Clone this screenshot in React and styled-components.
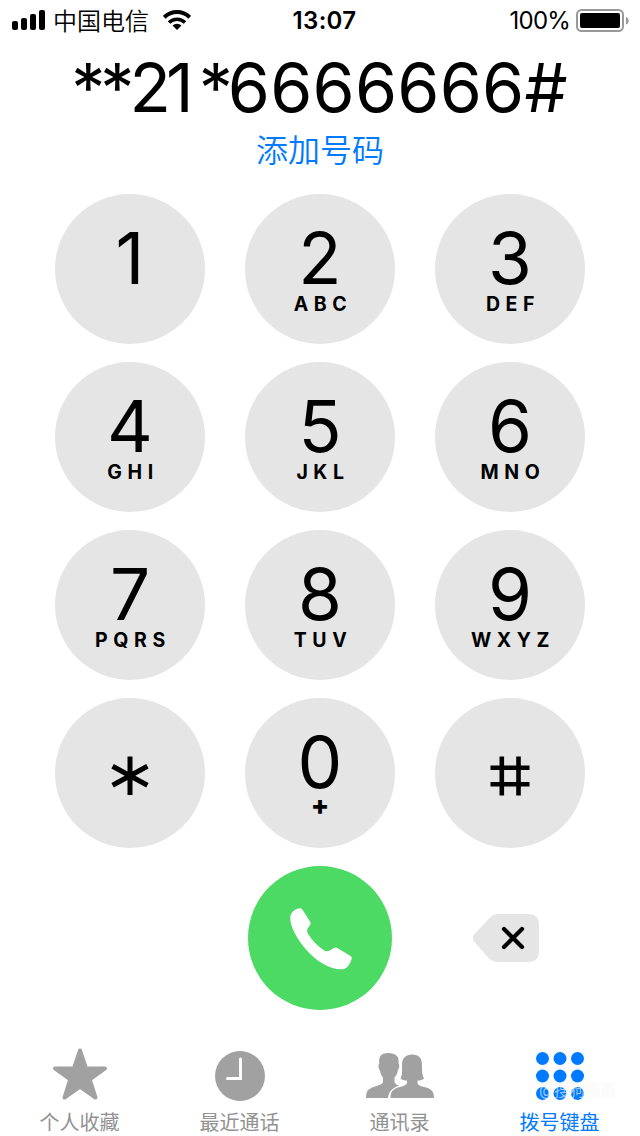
import styled, { createGlobalStyle } from "styled-components"

const keys = [
  { digit: "1", letters: "" },
  { digit: "2", letters: "ABC" },
  { digit: "3", letters: "DEF" },
  { digit: "4", letters: "GHI" },
  { digit: "5", letters: "JKL" },
  { digit: "6", letters: "MNO" },
  { digit: "7", letters: "PQRS" },
  { digit: "8", letters: "TUV" },
  { digit: "9", letters: "WXYZ" },
  { symbol: "star" },
  { digit: "0", letters: "+" },
  { symbol: "hash" },
]

const tabs = [
  { label: "个人收藏", Icon: StarIcon },
  { label: "最近通话", Icon: ClockIcon },
  { label: "通讯录", Icon: ContactsIcon },
  { label: "拨号键盘", Icon: KeypadIcon, active: true },
]

export default function App() {
  return (
    <SCPhone>
      <GlobalStyle />
      <StatusBar />
      <SCNumber>
        <SCTight>**2</SCTight>1<SCTight $gap>*</SCTight>6666666#
      </SCNumber>
      <SCAddNumber>添加号码</SCAddNumber>
      <SCKeypad>
        {keys.map((key) => (
          <Key key={key.digit || key.symbol} {...key} />
        ))}
      </SCKeypad>
      <SCActions>
        <SCCall aria-label="call">
          <PhoneIcon />
        </SCCall>
        <SCDelete aria-label="delete">
          <DeleteIcon />
        </SCDelete>
      </SCActions>
      <SCTabBar>
        {tabs.map(({ label, Icon, active }) => (
          <SCTab key={label} $active={active}>
            <SCTabIcon>
              <Icon />
              {active && <SCWatermark>@搜狗指南</SCWatermark>}
            </SCTabIcon>
            <SCTabLabel>{label}</SCTabLabel>
          </SCTab>
        ))}
      </SCTabBar>
    </SCPhone>
  )
}

function StatusBar() {
  return (
    <SCStatusBar>
      <SCStatusLeft>
        <SignalIcon />
        <SCCarrier>中国电信</SCCarrier>
        <WifiIcon />
      </SCStatusLeft>
      <SCTime>13:07</SCTime>
      <SCStatusRight>
        <SCPercent>100%</SCPercent>
        <BatteryIcon />
      </SCStatusRight>
    </SCStatusBar>
  )
}

function Key(props) {
  const { digit, letters, symbol } = props

  if (symbol) {
    return (
      <SCKey $centered aria-label={symbol}>
        {symbol === "star" ? <StarKeyIcon /> : <HashKeyIcon />}
      </SCKey>
    )
  }

  return (
    <SCKey>
      <SCDigit>{digit}</SCDigit>
      <SCLetters $plus={letters === "+"}>{letters}</SCLetters>
    </SCKey>
  )
}

function SignalIcon() {
  return (
    <svg width="33" height="20" viewBox="0 0 33 20" fill="#000">
      <rect x="0" y="11" width="6" height="9" rx="2" />
      <rect x="9" y="8" width="6" height="12" rx="2" />
      <rect x="18" y="4" width="6" height="16" rx="2" />
      <rect x="27" y="0" width="6" height="20" rx="2" />
    </svg>
  )
}

function WifiIcon() {
  return (
    <svg width="28" height="20" viewBox="0 0 28 20" fill="none" stroke="#000" strokeWidth="4">
      <path d="M1.3 7.300a18 18 0 0 1 25.400 0" />
      <path d="M6 12.500a11.300 11.300 0 0 1 16 0" strokeWidth="3.600" />
      <path d="M14 20l-4.500-4.400a6.400 6.400 0 0 1 9 0z" fill="#000" stroke="none" />
    </svg>
  )
}

function BatteryIcon() {
  return (
    <svg width="54" height="24" viewBox="0 0 54 24">
      <rect x="1" y="2" width="46" height="21" rx="4.5" fill="none" stroke="#999" strokeWidth="2" />
      <rect x="4" y="5" width="40" height="15" rx="2" fill="#000" />
      <path d="M50 9c3.600 1 3.600 6.500 0 7.500z" fill="#999" />
    </svg>
  )
}

function StarKeyIcon() {
  return (
    <svg width="38" height="40" viewBox="0 0 38 40" stroke="#000" strokeWidth="5">
      <path d="M19 0.500V39M1.600 10.200L36.400 29.200M36.400 10.200L1.600 29.200" />
    </svg>
  )
}

function HashKeyIcon() {
  return (
    <svg width="40" height="40" viewBox="0 0 40 40" stroke="#000" strokeWidth="4.6">
      <path d="M11.800 0.500V39.500M28.500 0.500V39.500M0.500 11.700H39.500M0.500 28.300H39.500" />
    </svg>
  )
}

function PhoneIcon() {
  return (
    <svg width="64" height="64" viewBox="0 0 64 64" fill="#fff">
      <path d="M8.500 1.800C11.500 0.600 12.600 1.400 14 3.600L21 14.500C22 16 21.700 17 20.700 18.500L18.700 21.600C17.600 23.500 18 25 19.200 27C23 33.500 28 38.500 34.500 43C36.500 44.400 38 44.700 40 43.700L44.600 41.200C46.200 40.300 47.200 40.400 48.700 41.200L60.800 48.600C62.800 49.900 63.200 50.700 62.400 52.800C60.300 58.200 58 61.700 53.500 62.300C41 63 27 54 17 42.500C7.500 31.500 0.500 18.500 1.300 9.500C2 5.500 4.500 3.200 8.500 1.800Z" />
    </svg>
  )
}

function DeleteIcon() {
  return (
    <svg width="66" height="48" viewBox="0 0 66 48">
      <path
        d="M25 0H55Q66 0 66 11V37Q66 48 55 48H25Q20 48 16.500 45L1 27.500Q-1.500 24 1 20.500L16.500 4Q20 0 25 0Z"
        fill="#e5e5e5"
      />
      <path d="M31 15L49 33M49 15L31 33" stroke="#000" strokeWidth="4.200" strokeLinecap="round" />
    </svg>
  )
}

function StarIcon() {
  return (
    <svg width="56" height="54" viewBox="0 0 56 54" fill="#a1a1a1" stroke="#a1a1a1" strokeWidth="4" strokeLinejoin="round">
      <path d="M28 3.500L34 21.500H53L37.800 32.500L43.500 50.500L28 39.500L12.500 50.500L18.200 32.500L3 21.500H22Z" />
    </svg>
  )
}

function ClockIcon() {
  return (
    <svg width="50" height="54" viewBox="0 0 50 54">
      <circle cx="25" cy="29" r="25" fill="#a1a1a1" />
      <path d="M25.500 12V31.500H12.500" fill="none" stroke="#fff" strokeWidth="3" strokeLinecap="round" />
    </svg>
  )
}

function ContactsIcon() {
  return (
    <svg width="68" height="54" viewBox="0 0 68 54" fill="#a1a1a1">
      <path d="M0 51C0 43 3 41.500 9 39.500C13 38 17 37.500 17 34.500V30.500C15 28.500 14.500 26 14 23.500C12.500 22 12 18 13.300 16.500C12.500 10 15 6 22 6C30 6 33.500 9.500 32.500 16.500C34 18 33 22 31.800 23.500C31.300 26.500 30.500 28.500 28.500 30.500V34.500C28.500 36.500 30 37.500 33 38.500C26 41.500 23 44 22 51Z" />
      <path d="M24.500 51C24.500 43.500 28 41.500 34 40C38 39 41 38 41 35.500V33.500C38.500 33.500 36 33 34.500 31.500C36.500 28 36 24 36 18C36 11 40 7.500 46 7.500C53 7.500 56 11 56 18C56 24 56 28 58 31.500C56.500 33 54 33.500 51.500 33.500V35.500C51.500 38 54 39 58 40C64.500 41.500 68 43.500 68 51Z" />
    </svg>
  )
}

function KeypadIcon() {
  const steps = [6.5, 24, 41.5]
  return (
    <svg width="48" height="54" viewBox="0 0 48 54" fill="#007aff">
      {steps.map((y) => steps.map((x) => <circle key={`${x}-${y}`} cx={x} cy={y + 5} r="6.500" />))}
    </svg>
  )
}

const GlobalStyle = createGlobalStyle`
  * {
    box-sizing: border-box;
  }

  body {
    margin: 0;
    background-color: #fff;
  }

  svg {
    display: block;
    flex-shrink: 0;
  }
`

const SCPhone = styled.div`
  width: 640px;
  height: 1136px;

  display: flex;
  flex-direction: column;

  background-color: #fff;
  color: #000;
  font-family: Inter, "Noto Sans CJK SC", sans-serif;
  overflow: hidden;
`

const SCStatusBar = styled.header`
  height: 40px;
  padding: 0 10px 0 12px;

  display: grid;
  grid-template-columns: 1fr auto 1fr;
  align-items: center;
`

const SCStatusLeft = styled.div`
  display: flex;
  align-items: center;
`

const SCCarrier = styled.span`
  margin: 0 14px 0 8px;
  padding-top: 4px;

  font-size: 24px;
  font-weight: 350;
  line-height: 36px;
`

const SCTime = styled.span`
  padding: 1px 0 0 7px;

  font-size: 24px;
  font-weight: 600;
  letter-spacing: 0.3px;
`

const SCStatusRight = styled.div`
  display: flex;
  justify-content: flex-end;
  align-items: center;
`

const SCPercent = styled.span`
  margin-right: 6px;
  padding-top: 1px;

  font-size: 24px;
  letter-spacing: -0.8px;
`

const SCNumber = styled.div`
  height: 86px;
  padding-right: 1px;

  font-size: 68px;
  line-height: 94px;
  letter-spacing: 0.2px;
  text-align: center;
  white-space: nowrap;
`

const SCTight = styled.span`
  margin-left: ${(props) => (props.$gap ? "5px" : "0")};

  letter-spacing: -5px;
`

const SCAddNumber = styled.div`
  height: 68px;

  color: #007aff;
  font-size: 32px;
  font-weight: 350;
  line-height: 50px;
  text-align: center;
`

const SCKeypad = styled.main`
  display: grid;
  grid-template-columns: repeat(3, 150px);
  grid-auto-rows: 150px;
  gap: 18px 40px;
  justify-content: center;
`

const SCKey = styled.button`
  padding: ${(props) => (props.$centered ? "6px 0 0" : "28px 0 0")};

  display: flex;
  flex-direction: column;
  justify-content: ${(props) => (props.$centered ? "center" : "flex-start")};
  align-items: center;

  border: none;
  border-radius: 50%;
  background-color: #e5e5e5;
  color: #000;
  font-family: inherit;
`

const SCDigit = styled.span`
  font-size: 71px;
  line-height: 72px;
`

const SCLetters = styled.span`
  padding-left: ${(props) => (props.$plus ? "0" : "6px")};

  font-size: ${(props) => (props.$plus ? "27px" : "19.5px")};
  font-weight: ${(props) => (props.$plus ? 800 : 700)};
  line-height: ${(props) => (props.$plus ? "16px" : "20px")};
  letter-spacing: ${(props) => (props.$plus ? "0" : "5.6px")};
`

const SCActions = styled.div`
  height: 144px;
  margin: 18px 55px 0;

  display: grid;
  grid-template-columns: repeat(3, 150px);
  column-gap: 40px;
  align-items: center;
  justify-items: center;
`

const SCCall = styled.button`
  width: 144px;
  height: 144px;
  padding: 2px 0 0 2px;

  grid-column: 2;
  display: flex;
  justify-content: center;
  align-items: center;

  border: none;
  border-radius: 50%;
  background-color: #4cd964;
`

const SCDelete = styled.button`
  padding: 0;
  margin-left: -8px;

  border: none;
  background: none;
`

const SCTabBar = styled.nav`
  height: 98px;
  margin-top: auto;

  display: grid;
  grid-template-columns: repeat(4, 1fr);
`

const SCTab = styled.div`
  padding-top: 9px;

  display: flex;
  flex-direction: column;
  align-items: center;

  color: ${(props) => (props.$active ? "#007aff" : "#929292")};
`

const SCTabIcon = styled.div`
  position: relative;
`

const SCTabLabel = styled.span`
  margin-top: 7px;
  padding-right: 1px;

  font-size: 20px;
  line-height: 30px;
`

const SCWatermark = styled.span`
  position: absolute;
  left: 3px;
  top: 35px;

  color: rgba(255, 255, 255, 0.6);
  font-size: 15.5px;
  line-height: 18px;
  text-shadow: 0 0 2px rgba(0, 0, 0, 0.05);
  white-space: nowrap;
`
